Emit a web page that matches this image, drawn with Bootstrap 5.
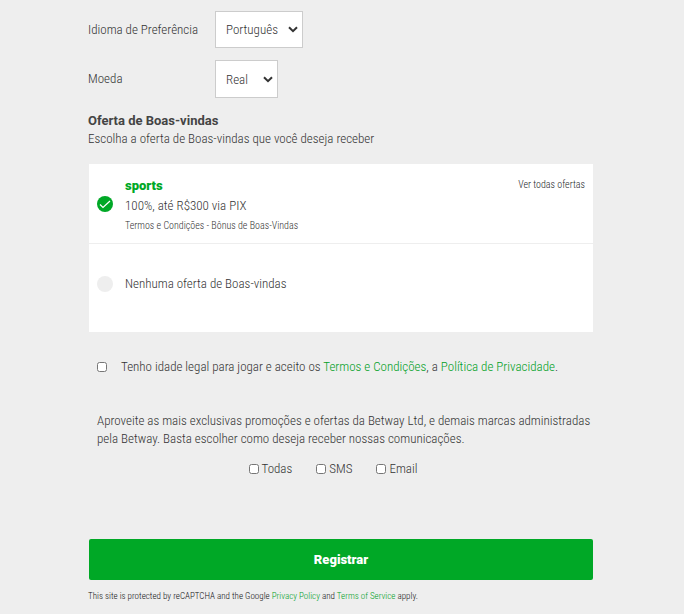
<!DOCTYPE html>
<html lang="pt-BR">
<head>
<meta charset="utf-8">
<meta name="viewport" content="width=device-width, initial-scale=1">
<title>Registro</title>
<link href="https://cdn.jsdelivr.net/npm/bootstrap@5.3.0/dist/css/bootstrap.min.css" rel="stylesheet">
<style>
  body { background: #eee; color: #333; font-family: "Roboto Condensed", Roboto, sans-serif; font-weight: 300; font-size: 13px; line-height: 18px; }
  a { color: #00a01e; text-decoration: none; }
  a:hover { text-decoration: underline; }
  .signup { padding: 11px 91px 12px 88px; }
  .field-label { width: 127px; }
  .field-select { width: auto; color: #333; font-size: 13px; font-weight: 300; line-height: 18px; border: 1px solid #ccc; border-radius: 0; padding: 9px 24px 8px 10px;
    background: #fff url("data:image/svg+xml,%3Csvg xmlns='http://www.w3.org/2000/svg' viewBox='0 0 10 7'%3E%3Cpath d='M1 1.2l4 4 4-4' fill='none' stroke='%23333' stroke-width='2'/%3E%3C/svg%3E") no-repeat right 4px center / 10px 7px; }
  .lang { width: 88px; }
  .coin { width: 63px; padding-top: 10px; }
  .heading, .brand-name, .submit { font-family: Roboto, sans-serif; font-size: 13px; line-height: 18px; }
  .heading { color: #444; font-weight: 700; margin-top: 14px; }
  .inset { margin-left: 1px; }
  .offer { padding: 0 8px; cursor: pointer; }
  .offer + .offer { border-top: 1px solid #eee; }
  .offer-main { min-height: 79px; }
  .offer-none { min-height: 89px; padding-bottom: 8px; }
  .pick { appearance: none; flex: none; width: 16px; height: 16px; margin: 0 12px 0 0; border-radius: 50%; background: #eee; }
  .pick:checked { background: #00a826 url("data:image/svg+xml,%3Csvg xmlns='http://www.w3.org/2000/svg' viewBox='0 0 16 16'%3E%3Cpath d='M3 8.5l3 3 7-6.5' fill='none' stroke='%23fff' stroke-width='1.2'/%3E%3C/svg%3E"); }
  .brand-name { color: #00a826; font-weight: 900; }
  .offer-text { display: grid; gap: 2px; padding-top: 4px; }
  .fine { font-size: 10px; line-height: 18px; }
  .legal { font-size: 9px; line-height: 12px; color: #111; padding-top: 2px; }
  .box { flex: none; width: 10px; height: 10px; margin: 0; }
  .agree { padding: 26px 0 0 8px; gap: 14px; }
  .promo { padding: 36px 0 0 8px; }
  .channels { gap: 24px; padding: 12px 16px 61px 0; }
  .channels label { gap: 3px; }
  .submit { background: #00a826; color: #fff; font-weight: 900; border: 0; border-radius: 2px; padding: 12px 0 11px; }
  .submit:hover { background: #00901f; color: #fff; }
</style>
<script src="https://cdn.jsdelivr.net/npm/bootstrap@5.3.0/dist/js/bootstrap.bundle.min.js" defer></script>
</head>
<body>
<form class="signup">
  <div class="d-flex align-items-center mb-2 pb-1">
    <label class="field-label" for="lang">Idioma de Preferência</label>
    <select class="form-select field-select lang" id="lang"><option>Português</option></select>
  </div>
  <div class="d-flex align-items-center">
    <label class="field-label" for="coin">Moeda</label>
    <select class="form-select field-select coin" id="coin"><option>Real</option></select>
  </div>
  <h2 class="heading mb-0">Oferta de Boas-vindas</h2>
  <p class="mb-3">Escolha a oferta de Boas-vindas que você deseja receber</p>
  <div class="inset">
    <div class="bg-white">
      <div class="offer offer-main d-flex align-items-center">
        <input class="pick" type="radio" name="offer" id="sports" checked>
        <label class="flex-grow-1 offer-text" for="sports">
          <span class="brand-name">sports</span>
          <span>100%, até R$300 via PIX</span>
          <span class="fine">Termos e Condições - Bônus de Boas-Vindas</span>
        </label>
        <a class="fine text-dark align-self-start mt-2 pt-1" href="#">Ver todas ofertas</a>
      </div>
      <div class="offer offer-none d-flex align-items-center">
        <input class="pick" type="radio" name="offer" id="none">
        <label for="none">Nenhuma oferta de Boas-vindas</label>
      </div>
    </div>
    <div class="agree d-flex align-items-center">
      <input class="box" type="checkbox" id="age">
      <label for="age">Tenho idade legal para jogar e aceito os <a href="#">Termos e Condições</a>, a <a href="#">Política de Privacidade</a>.</label>
    </div>
    <p class="promo mb-0">Aproveite as mais exclusivas promoções e ofertas da Betway Ltd, e demais marcas administradas pela Betway. Basta escolher como deseja receber nossas comunicações.</p>
    <div class="channels d-flex justify-content-center">
      <label class="d-flex align-items-center"><input class="box" type="checkbox">Todas</label>
      <label class="d-flex align-items-center"><input class="box" type="checkbox">SMS</label>
      <label class="d-flex align-items-center"><input class="box" type="checkbox">Email</label>
    </div>
    <button class="btn submit w-100 d-block" type="submit">Registrar</button>
  </div>
  <p class="legal mb-0 mt-2">This site is protected by reCAPTCHA and the Google <a href="#">Privacy Policy</a> and <a href="#">Terms of Service</a> apply.</p>
</form>
</body>
</html>
